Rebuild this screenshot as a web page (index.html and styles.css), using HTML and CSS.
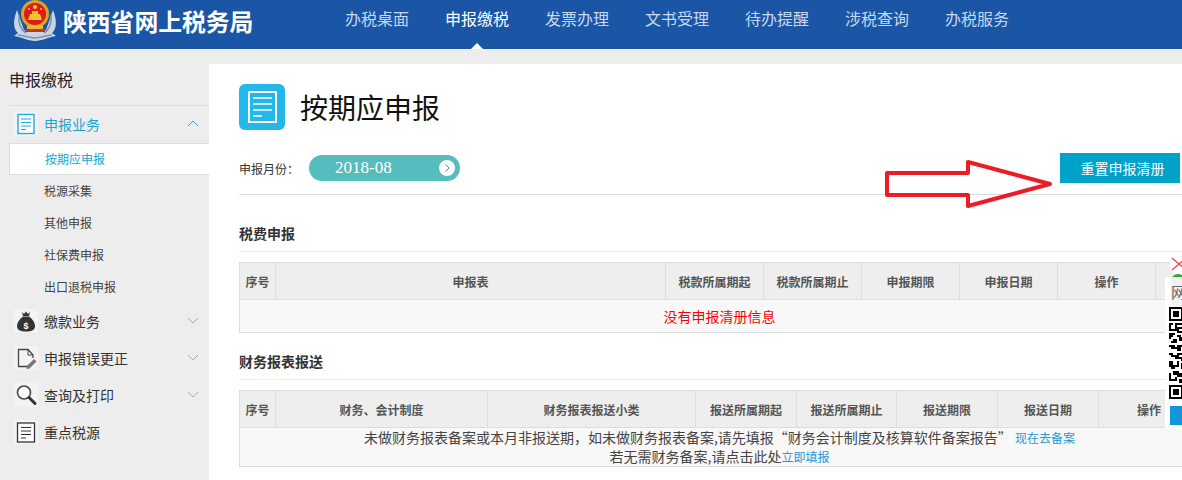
FILE: index.html
```html
<!DOCTYPE html>
<html lang="zh-CN">
<head>
<meta charset="utf-8">
<title>陕西省网上税务局</title>
<link rel="stylesheet" href="styles.css">
</head>
<body>
<header class="topbar">
  <div class="brand">
    <svg class="emblem" viewBox="0 0 44 42" aria-hidden="true">
      <path d="M4 10C0 20 0 29 5 33L1 36C9 37 15 41 22 41C29 41 35 37 43 36L39 33C44 29 44 20 40 10L33 30H11Z" fill="#c9d5e3"/>
      <path d="M6 15C5 23 8 30 13 33M38 15C39 23 36 30 31 33M5 35C14 36 18 38 22 38C26 38 30 36 39 35" fill="none" stroke="#7d93ad" stroke-width="1.5"/>
      <circle cx="22" cy="14" r="14" fill="#d9a520"/>
      <circle cx="22" cy="14" r="11" fill="#e01a1a"/>
      <rect x="14" y="25" width="16" height="5" fill="#e8b92c"/>
      <rect x="12" y="29" width="20" height="3" fill="#c8321e"/>
      <circle cx="22" cy="7" r="2" fill="#f6d23a"/>
      <circle cx="16" cy="9" r="1" fill="#f6d23a"/><circle cx="28" cy="9" r="1" fill="#f6d23a"/>
      <path d="M15 20L17 14H27L29 20Z" fill="#f0c22e"/>
      <rect x="19" y="11" width="6" height="3" fill="#f0c22e"/>
    </svg>
    <span class="brand-name">陕西省网上税务局</span>
  </div>
  <nav class="nav">
    <a class="nav-item">办税桌面</a>
    <a class="nav-item is-active">申报缴税</a>
    <a class="nav-item">发票办理</a>
    <a class="nav-item">文书受理</a>
    <a class="nav-item">待办提醒</a>
    <a class="nav-item">涉税查询</a>
    <a class="nav-item">办税服务</a>
  </nav>
</header>

<div class="layout">
  <aside class="sidebar">
    <div class="side-title">申报缴税</div>
    <div class="menu-head is-open">
      <span class="menu-icon">
        <svg viewBox="0 0 24 24"><rect x="4" y="2.5" width="16" height="19" fill="#fff" stroke="#23a9d8" stroke-width="1.4"/><path d="M7 7H17M7 10.5H17M7 14H17M7 17.5H12" stroke="#23a9d8" stroke-width="1.2"/></svg>
      </span>
      <span class="menu-label">申报业务</span>
      <svg class="chevron" viewBox="0 0 12 7"><path d="M1 6L6 1L11 6"/></svg>
    </div>
    <ul class="submenu">
      <li class="sub-item is-current">按期应申报</li>
      <li class="sub-item">税源采集</li>
      <li class="sub-item">其他申报</li>
      <li class="sub-item">社保费申报</li>
      <li class="sub-item">出口退税申报</li>
    </ul>
    <div class="menu-head">
      <span class="menu-icon">
        <svg viewBox="0 0 24 24"><path d="M8 3L10 5L12 2.5L14 5L16 3L15 7H9Z" fill="#333"/><path d="M9 7.5H15C19 10.5 21 14 21 17C21 21 18 22.5 12 22.5C6 22.5 3 21 3 17C3 14 5 10.5 9 7.5Z" fill="#333"/><text class="bag-sign" x="12" y="19.5" text-anchor="middle">$</text></svg>
      </span>
      <span class="menu-label">缴款业务</span>
      <svg class="chevron" viewBox="0 0 12 7"><path d="M1 1L6 6L11 1"/></svg>
    </div>
    <div class="menu-head">
      <span class="menu-icon">
        <svg viewBox="0 0 24 24"><path d="M14 20.5H4.500V3.500H14L19 9V12" fill="none" stroke="#444" stroke-width="1.3"/><path d="M14 3.500V9H19" fill="none" stroke="#444" stroke-width="1"/><path d="M13 20L20 13L22.500 15.500L15.500 22.500L12.500 23Z" fill="#777"/></svg>
      </span>
      <span class="menu-label">申报错误更正</span>
      <svg class="chevron" viewBox="0 0 12 7"><path d="M1 1L6 6L11 1"/></svg>
    </div>
    <div class="menu-head">
      <span class="menu-icon">
        <svg viewBox="0 0 24 24"><circle cx="10" cy="9.500" r="6.500" fill="#fff" stroke="#444" stroke-width="1.600"/><path d="M15 14.500L21 20.500" stroke="#333" stroke-width="3" stroke-linecap="round"/></svg>
      </span>
      <span class="menu-label">查询及打印</span>
      <svg class="chevron" viewBox="0 0 12 7"><path d="M1 1L6 6L11 1"/></svg>
    </div>
    <div class="menu-head">
      <span class="menu-icon">
        <svg viewBox="0 0 24 24"><rect x="3.500" y="3" width="17" height="19" fill="#fff" stroke="#333" stroke-width="1.300"/><path d="M7 7.500H17M7 11H17M7 14.500H17M7 18H12" stroke="#333" stroke-width="1.200"/></svg>
      </span>
      <span class="menu-label">重点税源</span>
    </div>
  </aside>

  <main class="content">
    <div class="page-head">
      <svg class="page-icon" viewBox="0 0 46 46"><rect width="46" height="46" rx="6" fill="#23b7ea"/><rect x="10" y="8" width="27" height="30" fill="none" stroke="#fff" stroke-width="2"/><path d="M14 14H33M14 20H33M14 26H33M14 32H23" stroke="#fff" stroke-width="1.600"/></svg>
      <h1 class="page-title">按期应申报</h1>
    </div>
    <div class="month-row">
      <div class="month-left">
        <span class="month-label">申报月份：</span>
        <div class="month-pill">
          <span class="month-value">2018-08</span>
          <span class="month-next"><svg viewBox="0 0 16 16"><path d="M6.500 4.500L10 8L6.500 11.500"/></svg></span>
        </div>
      </div>
      <button class="reset-btn" type="button">重置申报清册</button>
    </div>

    <h2 class="section-title">税费申报</h2>
    <table class="grid grid-tax">
      <thead>
        <tr><th>序号</th><th>申报表</th><th>税款所属期起</th><th>税款所属期止</th><th>申报期限</th><th>申报日期</th><th>操作</th><th></th></tr>
      </thead>
      <tbody>
        <tr><td colspan="8" class="empty-msg">没有申报清册信息</td></tr>
      </tbody>
    </table>

    <h2 class="section-title section-second">财务报表报送</h2>
    <table class="grid grid-fin">
      <thead>
        <tr><th>序号</th><th>财务、会计制度</th><th>财务报表报送小类</th><th>报送所属期起</th><th>报送所属期止</th><th>报送期限</th><th>报送日期</th><th>操作</th></tr>
      </thead>
      <tbody>
        <tr><td colspan="8" class="notice">
          <div>未做财务报表备案或本月非报送期，如未做财务报表备案,请先填报“财务会计制度及核算软件备案报告” <a class="link">现在去备案</a></div>
          <div>若无需财务备案,请点击此处<a class="link">立即填报</a></div>
        </td></tr>
      </tbody>
    </table>
  </main>
</div>

<svg class="annot-arrow" viewBox="0 0 172 52" aria-hidden="true">
  <path d="M2 13H83V2L165 24L83 46V35H2Z" fill="none" stroke="#ed1c24" stroke-width="4" stroke-linejoin="round"/>
</svg>

<aside class="float-card">
  <div class="float-close"><svg viewBox="0 0 16 16"><path d="M2 2L16 14M2 14L16 2"/></svg></div>
  <div class="float-green"></div>
  <div class="float-body">
    <div class="float-text">网</div>
    <svg class="float-qr" viewBox="0 0 14 92" aria-hidden="true">
      <path fill="#000" fill-rule="evenodd" d="M0 0H14V14H0ZM2 2V12H12V2ZM4 4H10V10H4Z"/>
      <path fill="#000" d="M0 16H4V18H2V22H6V24H0ZM6 16H14V18H8V20H14V22H10V24H14V26H8V24H6V20H6ZM0 26H6V28H4V30H2V32H0ZM8 28H12V30H14V34H10V30H8ZM4 32H8V36H2V34H4ZM0 38H6V40H8V38H14V40H12V44H8V42H2V40H0ZM0 46H4V48H8V46H14V48H10V50H14V54H12V52H6V50H2V48H0ZM0 54H4V58H8V54H10V60H6V62H2V60H0ZM12 56H14V62H12ZM4 64H10V66H14V70H8V68H4ZM0 66H2V72H6V70H8V74H0ZM10 72H14V76H10Z"/>
      <path fill="#000" fill-rule="evenodd" d="M0 78H14V92H0ZM2 80V90H12V80ZM4 82H10V88H4Z"/>
    </svg>
    <div class="float-blue"></div>
  </div>
</aside>
</body>
</html>
```
FILE: styles.css
```css
* { box-sizing: border-box; }
html, body { margin: 0; padding: 0; }
body {
  width: 1182px;
  height: 480px;
  overflow: hidden;
  position: relative;
  background: #ededed;
  font-family: "Noto Sans CJK SC", "Liberation Sans", sans-serif;
  color: #333;
}
.topbar {
  height: 49px;
  background: #1a56a5;
  display: flex;
}
.brand {
  width: 345px;
  flex: none;
  display: flex;
  align-items: flex-start;
  padding-left: 13px;
}
.emblem { width: 44px; height: 42px; flex: none; }
.brand-name {
  margin-left: 6px;
  font-size: 23.800px;
  line-height: 42px;
  font-weight: 700;
  color: #fff;
  white-space: nowrap;
}
.nav { display: flex; gap: 36px; }
.nav-item {
  position: relative;
  width: 64px;
  font-size: 16px;
  line-height: 36px;
  color: #c6d9f0;
  white-space: nowrap;
}
.nav-item.is-active { color: #fff; }
.nav-item.is-active::after {
  content: "";
  position: absolute;
  left: 26px;
  bottom: 0;
  border: 6px solid transparent;
  border-top: 0;
  border-bottom-color: #fff;
}
.layout { display: flex; }
.sidebar {
  width: 209px;
  flex: none;
  padding: 20px 0 0 9px;
}
.side-title {
  height: 37px;
  font-size: 16px;
  line-height: 20px;
  color: #222;
  border-bottom: 1px solid #ddd;
}
.menu-head {
  height: 37px;
  display: flex;
  align-items: center;
  padding: 0 0 2px 5px;
  font-size: 14px;
  color: #333;
}
.menu-head.is-open { color: #19a5d1; }
.menu-icon {
  width: 24px;
  height: 24px;
  flex: none;
  background: #f3f3f3;
  margin-right: 6px;
}
.menu-icon svg { display: block; width: 24px; height: 24px; }
.bag-sign { font-family: "Liberation Sans", sans-serif; font-size: 9px; font-weight: 700; fill: #fff; }
.menu-label { flex: 1; white-space: nowrap; }
.chevron {
  width: 12px;
  height: 7px;
  margin-right: 10px;
  fill: none;
  stroke: #aaa;
  stroke-width: 1;
}
.is-open .chevron { stroke: #2fa4cc; }
.submenu { list-style: none; margin: 0; padding: 0; }
.sub-item {
  height: 32px;
  padding-left: 35px;
  font-size: 12px;
  line-height: 32px;
  color: #444;
}
.sub-item.is-current {
  background: #fff;
  color: #19a5d1;
  line-height: 30px;
  border: 1px solid #ddd;
  border-right: 0;
  padding-left: 35px;
}
.content {
  margin-top: 15px;
  flex: 1;
  min-width: 0;
  height: 416px;
  background: #fff;
  padding: 20px 0 0 30px;
}
.page-head { display: flex; align-items: center; height: 46px; }
.page-icon { width: 46px; height: 46px; flex: none; }
.page-title {
  margin: 0 0 0 15px;
  font-size: 28px;
  font-weight: 400;
  line-height: 46px;
  color: #111;
}
.month-row {
  margin-top: 23px;
  height: 42px;
  padding: 0 2px 11px 0;
  border-bottom: 1px solid #ddd;
  display: flex;
  justify-content: space-between;
  align-items: center;
}
.month-left { display: flex; align-items: center; }
.month-label {
  width: 70px;
  font-family: "Noto Sans CJK TC", "Noto Sans CJK SC", sans-serif;
  font-size: 12px;
  color: #333;
}
.month-pill {
  width: 151px;
  height: 26px;
  border-radius: 13px;
  background: #55bdbd;
  display: flex;
  align-items: center;
  justify-content: space-between;
  padding: 0 5px 0 26px;
}
.month-value { font-family: "Liberation Serif", serif; font-size: 17px; color: #fff; }
.month-next {
  width: 16px;
  height: 16px;
  border-radius: 50%;
  background: #fff;
}
.month-next svg { display: block; width: 16px; height: 16px; fill: none; stroke: #2e9da0; stroke-width: 1; }
.reset-btn {
  width: 120px;
  height: 30px;
  padding: 0 0 0 5px;
  border: 0;
  background: #00a2ca;
  color: #fff;
  font: inherit;
  font-size: 14px;
}
.section-title {
  margin: 29px 0 0;
  height: 28px;
  padding: 0 0 9px;
  font-size: 14px;
  line-height: 18px;
  font-weight: 700;
  color: #333;
  border-bottom: 1px solid #eee;
}
.section-second { margin-top: 19px; }
.grid {
  width: 960px;
  margin-top: 10px;
  table-layout: fixed;
  border-collapse: collapse;
  font-size: 12px;
}
.grid th, .grid td { border: 1px solid #ddd; padding: 0; text-align: center; }
.grid th {
  height: 37px;
  background: #eee;
  color: #555;
  font-weight: 700;
}
.grid td { background: #f8f8f8; }
.grid-tax th:nth-child(1) { width: 36px; }
.grid-tax th:nth-child(2) { width: 390px; }
.grid-tax th:nth-child(n+3) { width: 98px; }
.grid-tax th:nth-child(8) { width: 44px; }
.grid-fin th:nth-child(1) { width: 36px; }
.grid-fin th:nth-child(2) { width: 212px; }
.grid-fin th:nth-child(3) { width: 208px; }
.grid-fin th:nth-child(n+4) { width: 101px; }
.grid-fin th:nth-child(5) { width: 100px; }
.empty-msg { height: 33px; font-size: 14px; color: #f00; }
.notice { height: 38px; font-size: 14px; line-height: 18px; color: #444; }
.link { font-size: 12px; color: #1a9ad6; }
.annot-arrow {
  position: absolute;
  left: 885px;
  top: 160px;
  width: 172px;
  height: 52px;
}
.float-card {
  position: absolute;
  left: 1165px;
  top: 252px;
  width: 17px;
  height: 177px;
}
.float-close {
  position: absolute;
  left: 5px;
  top: 0;
  width: 24px;
  height: 24px;
  border-radius: 50%;
  background: #fff;
}
.float-close svg {
  display: block;
  width: 16px;
  height: 16px;
  margin: 4px 0 0 0;
  fill: none;
  stroke: #f33;
  stroke-width: 1.200;
}
.float-green {
  position: absolute;
  left: 6px;
  top: 22px;
  width: 14px;
  height: 8px;
  border-radius: 7px 7px 0 0;
  background: #2eaa2e;
}
.float-body {
  position: absolute;
  left: 0;
  top: 25px;
  width: 17px;
  height: 152px;
  background: #fff;
  overflow: hidden;
}
.float-text {
  margin-left: 6px;
  width: 20px;
  height: 30px;
  font-size: 15px;
  line-height: 30px;
  color: #666;
  background: #f2f2f2;
}
.float-qr { display: block; width: 14px; height: 92px; margin: 0 0 0 4px; }
.float-blue { margin: 7px 0 0 5px; width: 14px; height: 19px; background: #1296db; }
```
